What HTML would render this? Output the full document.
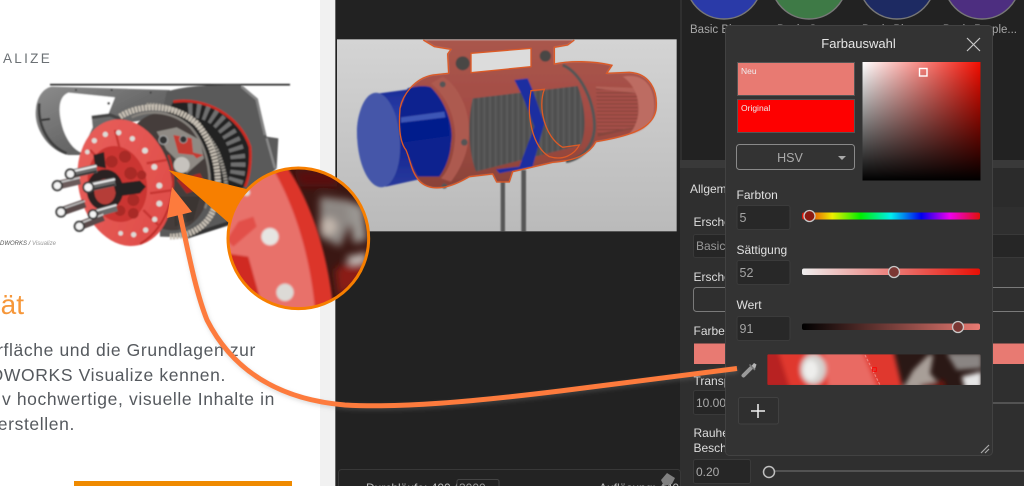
<!DOCTYPE html>
<html><head><meta charset="utf-8"><style>
html,body{margin:0;padding:0;background:#fff;width:1024px;height:486px;overflow:hidden}
svg{display:block;position:absolute;left:0;top:0}
text{font-family:"Liberation Sans",sans-serif}
</style></head><body>
<svg width="1024" height="486" viewBox="0 0 1024 486" xmlns="http://www.w3.org/2000/svg">
<defs>
<filter id="b1" x="-10%" y="-10%" width="120%" height="120%"><feGaussianBlur stdDeviation="2.6"/></filter>
<filter id="b2" x="-20%" y="-20%" width="140%" height="140%"><feGaussianBlur stdDeviation="7"/></filter>
<filter id="b3" x="-20%" y="-20%" width="140%" height="140%"><feGaussianBlur stdDeviation="3.5"/></filter>
<filter id="b4" x="-30%" y="-30%" width="160%" height="160%"><feGaussianBlur stdDeviation="12"/></filter>
<filter id="sh" x="-10%" y="-10%" width="120%" height="120%"><feGaussianBlur stdDeviation="2"/></filter>
<linearGradient id="vp" x1="0" y1="0" x2="0" y2="1"><stop offset="0" stop-color="#d4d4d4"/><stop offset="1" stop-color="#bababa"/></linearGradient>
<linearGradient id="blu" x1="0" y1="0" x2="0" y2="1"><stop offset="0" stop-color="#1a2a96"/><stop offset=".3" stop-color="#2a3fa8"/><stop offset=".5" stop-color="#0c2090"/><stop offset="1" stop-color="#2a3a9c"/></linearGradient>
<linearGradient id="red" x1="0" y1="0" x2="0" y2="1"><stop offset="0" stop-color="#a9564c"/><stop offset=".5" stop-color="#a34c44"/><stop offset="1" stop-color="#8a4238"/></linearGradient>
<linearGradient id="mot" x1="0" y1="0" x2="0" y2="1"><stop offset="0" stop-color="#b5635a"/><stop offset=".4" stop-color="#a4534a"/><stop offset="1" stop-color="#83443c"/></linearGradient>
<linearGradient id="fr" x1="0" y1="0" x2="1" y2="1"><stop offset="0" stop-color="#8c8c8c"/><stop offset=".5" stop-color="#6a6a6a"/><stop offset="1" stop-color="#4e4e4e"/></linearGradient>
<pattern id="drum" width="17" height="10" patternUnits="userSpaceOnUse"><rect width="17" height="10" fill="#505050"/><rect width="6" height="10" fill="#5c5c5c"/></pattern>
<pattern id="fin" width="10" height="11" patternUnits="userSpaceOnUse"><rect width="10" height="11" fill="#a55048"/><rect y="0" width="10" height="3" fill="#823f37"/></pattern>
<linearGradient id="svH"><stop offset="0" stop-color="#fff"/><stop offset="1" stop-color="#f20d00"/></linearGradient>
<linearGradient id="svV" x1="0" y1="0" x2="0" y2="1"><stop offset="0" stop-color="#000" stop-opacity="0"/><stop offset="1" stop-color="#000"/></linearGradient>
<linearGradient id="hue"><stop offset="0" stop-color="#e01008"/><stop offset=".17" stop-color="#ee0"/><stop offset=".33" stop-color="#0e0"/><stop offset=".5" stop-color="#0ee"/><stop offset=".67" stop-color="#00e"/><stop offset=".83" stop-color="#e0e"/><stop offset="1" stop-color="#e01008"/></linearGradient>
<linearGradient id="sat"><stop offset="0" stop-color="#eee"/><stop offset="1" stop-color="#e80f05"/></linearGradient>
<linearGradient id="val"><stop offset="0" stop-color="#000"/><stop offset="1" stop-color="#e87a72"/></linearGradient>
<linearGradient id="disc" x1="0" y1="0" x2="1" y2="1"><stop offset="0" stop-color="#e8605c"/><stop offset="1" stop-color="#de4a46"/></linearGradient>
<clipPath id="mag"><circle cx="895" cy="595" r="210"/></clipPath>
<clipPath id="strip"><rect x="262" y="343" width="640" height="92" rx="3"/></clipPath>
<clipPath id="vclip"><rect x="3" y="28" width="1019" height="576"/></clipPath>
</defs>

<!-- left page -->
<rect x="0" y="0" width="320" height="486" fill="#fff"/>
<rect x="320" y="0" width="15" height="486" fill="#f1f1f1"/>
<rect x="335" y="0" width="1" height="486" fill="#666"/>
<text x="3" y="63" font-size="13.5" letter-spacing="2.3" fill="#6b7074">ALIZE</text>
<text x="0" y="245" font-size="6" font-style="italic" fill="#555">DWORKS / <tspan fill="#999">Visualize</tspan></text>
<text x="24" y="314" text-anchor="end" font-size="28" fill="#f6973a">ät</text>
<g font-size="17.5" fill="#55595e" letter-spacing=".62" text-anchor="end">
<text x="256" y="356">rfläche und die Grundlagen zur</text>
<text x="226" y="381">DWORKS Visualize kennen.</text>
<text x="275" y="405">v hochwertige, visuelle Inhalte in</text>
<text x="75" y="430">erstellen.</text>
</g>
<rect x="74" y="481" width="218" height="5" fill="#ef8a00"/>

<!-- clutch image -->
<g transform="translate(0,40) scale(.33333)">
<g filter="url(#b1)">
<path d="M150,134 L870,134" stroke="#1c1c1c" stroke-width="5" fill="none"/>
<!-- left frame -->
<path d="M155,140 L510,150 L500,230 L290,262 L250,345 L205,345 C140,330 100,260 108,205 C112,170 130,145 155,140Z" fill="url(#fr)"/>
<path d="M205,158 C178,170 170,205 190,270 C205,310 225,330 243,337 L278,262 L275,232 L325,222 L345,172 Z" fill="#fff"/>
<path d="M118,190 C112,250 140,315 200,340" fill="none" stroke="#3c3c3c" stroke-width="8"/>
<path d="M125,240 L150,237" stroke="#2c2c2c" stroke-width="6"/>
<path d="M275,232 L330,225 L370,240" fill="none" stroke="#444" stroke-width="10"/>
<g fill="#333"><circle cx="228" cy="150" r="3"/><circle cx="335" cy="150" r="3"/><circle cx="452" cy="158" r="3"/><circle cx="326" cy="190" r="4"/></g>
<!-- right frame -->
<path d="M500,155 C560,135 650,135 720,135 L770,175 L800,290 L835,295 L830,385 L770,440 L700,545 L560,592 L480,590 L470,300Z" fill="#5a5a5a"/>
<path d="M725,140 L770,178 L795,285" fill="none" stroke="#858585" stroke-width="8"/>
<path d="M800,295 L825,385" stroke="#8a8a8a" stroke-width="7"/>
<path d="M560,590 L700,545" stroke="#333" stroke-width="12"/>
<!-- coils -->
<path d="M520,185 C620,170 720,230 750,320 C755,370 745,420 735,440 L600,500 L480,260Z" fill="#242424"/>
<path d="M565,212 C640,205 695,270 712,340 C718,380 712,410 705,428" fill="none" stroke="#6e6e6e" stroke-width="44" stroke-dasharray="12 12"/>
<path d="M520,185 C620,170 720,230 750,320 C755,370 745,420 735,440" fill="none" stroke="#c92c24" stroke-width="8"/>
<!-- gears -->
<path d="M440,195 C520,190 600,240 650,330 C680,400 690,470 665,520" fill="none" stroke="#9c9890" stroke-width="12" stroke-dasharray="6 3"/>
<ellipse cx="500" cy="395" rx="128" ry="178" transform="rotate(-12 500 395)" fill="#443d3a"/>
<path d="M360,230 C420,190 520,190 590,250 C650,320 670,430 640,510 C620,560 570,590 510,590" fill="none" stroke="#c8c0b4" stroke-width="18" stroke-dasharray="7 3"/>
<path d="M395,232 C450,205 525,215 575,265 C625,325 645,430 615,505" fill="none" stroke="#85817c" stroke-width="7"/>
<path d="M470,275 L530,262 L600,300 L612,355 L560,400 L540,370 L500,330Z" fill="#8f8a84"/>
<path d="M520,285 L575,295 L580,345 L535,340Z" fill="#c43a32"/>
<circle cx="490" cy="300" r="13" fill="#333" stroke="#aaa" stroke-width="3"/>
<circle cx="550" cy="298" r="11" fill="#333" stroke="#999" stroke-width="3"/>
<circle cx="545" cy="375" r="24" fill="#c6c2bd"/>
<path d="M570,335 L610,345 L590,355Z" fill="#c43a32"/>
<path d="M530,420 L600,400 L620,440 L560,460Z" fill="#a92822"/>
<path d="M520,470 L600,470 L580,540 L525,560Z" fill="#3a3431"/>
<!-- disc -->
<ellipse cx="375" cy="428" rx="140" ry="192" transform="rotate(-12 375 428)" fill="url(#disc)"/>
<path d="M505,345 C540,430 510,560 420,612" fill="none" stroke="#bc2c26" stroke-width="6"/>
<ellipse cx="352" cy="432" rx="88" ry="115" transform="rotate(-12 352 432)" fill="#cb3632"/>
<path d="M440,370 L500,360 M450,460 L520,450 M430,510 L480,560 M345,270 L360,330 M270,330 L310,370" stroke="#c63430" stroke-width="7"/>
<g fill="#dedbd7"><circle cx="283" cy="302" r="8"/><circle cx="316" cy="283" r="8"/><circle cx="356" cy="278" r="8"/><circle cx="397" cy="296" r="8"/><circle cx="435" cy="332" r="9"/><circle cx="463" cy="381" r="9"/><circle cx="478" cy="437" r="9"/><circle cx="478" cy="491" r="9"/><circle cx="464" cy="538" r="8"/><circle cx="437" cy="570" r="8"/><circle cx="401" cy="584" r="8"/><circle cx="362" cy="580" r="7"/><circle cx="262" cy="336" r="7"/></g>
<g fill="#a92a26"><circle cx="335" cy="365" r="18"/><circle cx="375" cy="350" r="18"/><circle cx="392" cy="400" r="19"/><circle cx="425" cy="405" r="14"/><circle cx="400" cy="480" r="18"/><circle cx="360" cy="512" r="16"/><circle cx="400" cy="520" r="16"/></g>
<ellipse cx="315" cy="450" rx="55" ry="62" fill="#2a2424"/>
<ellipse cx="315" cy="455" rx="32" ry="38" fill="#b53c38"/>
<path d="M340,432 L420,422 L438,440 L420,460 L350,470Z" fill="#272020"/>
<path d="M280,345 L312,336 L318,385 L285,378Z" fill="#2c2020"/>
<g stroke-linecap="butt" fill="none">
<path d="M210,403 L290,385" stroke="#6a6a6a" stroke-width="26"/><path d="M210,396 L290,378" stroke="#eee" stroke-width="6"/><path d="M210,412 L290,394" stroke="#333" stroke-width="6"/>
<path d="M172,436 L240,420" stroke="#6a5a5a" stroke-width="26"/><path d="M172,429 L240,413" stroke="#ccc" stroke-width="5"/>
<path d="M265,442 L345,425" stroke="#6a6a6a" stroke-width="26"/><path d="M265,435 L345,418" stroke="#eee" stroke-width="6"/><path d="M265,451 L345,434" stroke="#333" stroke-width="6"/>
<path d="M183,515 L255,490" stroke="#5a4a4a" stroke-width="26"/><path d="M183,508 L255,483" stroke="#bbb" stroke-width="5"/>
<path d="M280,522 L350,502" stroke="#6a6a6a" stroke-width="24"/><path d="M280,515 L350,495" stroke="#eee" stroke-width="5"/>
<path d="M238,558 L310,530" stroke="#5a4a4a" stroke-width="26"/><path d="M238,551 L310,523" stroke="#ccc" stroke-width="5"/>
</g>
<g fill="#f4f4f4" stroke="#3a3a3a" stroke-width="6"><circle cx="211" cy="402" r="14"/><circle cx="172" cy="437" r="14"/><circle cx="265" cy="442" r="15"/><circle cx="183" cy="516" r="14"/><circle cx="279" cy="523" r="13"/><circle cx="238" cy="559" r="14"/></g>
</g>
</g>

<!-- dark centre -->
<rect x="336" y="0" width="344" height="486" fill="#222"/>
<g transform="translate(336,30) scale(.33333)">
<rect x="3" y="28" width="1019" height="576" fill="url(#vp)"/>
<g clip-path="url(#vclip)" filter="url(#b1)">
<rect x="494" y="430" width="13" height="180" fill="#575757"/>
<rect x="556" y="420" width="14" height="190" fill="#575757"/>
<!-- blue cylinder -->
<path d="M130,190 L280,170 L350,300 L330,430 L150,470 C100,460 62,380 63,300 C65,230 95,195 130,190Z" fill="url(#blu)"/>
<ellipse cx="128" cy="330" rx="64" ry="142" transform="rotate(-4 128 330)" fill="#4457a9"/>
<!-- body -->
<path d="M192,235 C200,195 235,145 290,135 L338,130 L335,72 L345,58 L295,50 L262,30 L715,30 L695,45 L655,52 L655,102 C700,92 770,92 828,106 L812,130 L880,127 C940,130 967,180 960,240 C950,290 900,315 780,335 C760,372 720,392 650,397 L530,425 L520,456 L482,456 L470,432 L400,440 C350,470 290,490 252,455 C225,425 225,395 210,360 C190,335 188,285 192,235Z" fill="url(#red)"/>
<!-- blue over body -->
<path d="M215,175 C240,168 270,165 285,172 C330,215 355,290 345,340 C342,385 325,420 310,440 L245,440 C228,415 225,395 210,360 C190,335 188,285 192,235Z" fill="#10238f"/>
<path d="M195,278 L335,262 L340,318 L198,338Z" fill="#001f8c"/>
<path d="M195,262 L325,245 L328,262 L195,278Z" fill="#3e56b6"/>
<path d="M285,160 C340,205 365,280 355,345 C350,390 335,425 315,445 L345,455 C380,410 410,340 395,260 C385,205 350,155 320,140Z" fill="#ad5a50"/>
<path d="M780,170 L925,175 L925,290 L785,320Z" fill="url(#mot)"/>
<path d="M780,175 L905,190 L905,290 L785,310Z" fill="url(#fin)"/>
<path d="M860,140 C930,125 960,180 955,240 C950,280 920,305 880,312 C920,270 920,180 860,140Z" fill="#bd6c62"/>
<path d="M680,105 C740,130 780,230 775,300 C770,350 740,385 690,395" fill="none" stroke="#555" stroke-width="9"/>
<path d="M410,205 L725,168 C745,220 755,290 735,345 L420,425 C395,360 395,270 410,205Z" fill="url(#drum)"/>
<path d="M535,150 L575,145 L590,180 L625,280 L590,410 L490,430 L480,418 L550,410 L595,290 L560,200Z" fill="#1c2fa0"/>
<circle cx="380" cy="100" r="21" fill="#4a4644"/><circle cx="628" cy="78" r="17" fill="#4a4644"/><circle cx="320" cy="163" r="9" fill="#555"/><circle cx="385" cy="337" r="10" fill="#555"/>
<circle cx="325" cy="468" r="8" fill="#555"/>
</g>
<g clip-path="url(#vclip)" fill="none" stroke="#dc5a26" stroke-width="4">
<path d="M262,30 L295,50 L345,58 L335,72 L338,130 L290,135 C235,145 200,195 192,235 C188,285 190,335 210,360 C225,395 225,425 252,455 C290,490 350,470 400,440 L470,432 L482,456 L520,456 L530,425 L650,397 C720,392 760,372 780,335 C900,315 950,290 960,240 C967,180 940,130 880,127 L812,130 L828,106 C770,92 700,92 655,102 L655,52 L695,45 L715,30"/>
<path d="M585,182 L625,178 C605,230 625,320 680,352 L730,345 C715,375 680,392 640,380 C590,350 570,260 585,182Z"/>
</g>
<path d="M405,70 L585,55 L585,110 L405,128Z" fill="#dcdcdc" stroke="#dc5a26" stroke-width="4"/>
</g>

<!-- right panel -->
<rect x="680" y="0" width="344" height="486" fill="#2f2f2f"/>
<rect x="682" y="0" width="342" height="160" fill="#222"/>
<rect x="680" y="160" width="344" height="8" fill="#393939"/>
<rect x="992" y="168" width="32" height="39" fill="#2b2b2b"/>
<g stroke="#777" stroke-width="1.5">
<circle cx="724" cy="-19" r="38" fill="#2a3aa8"/>
<circle cx="809" cy="-19" r="38" fill="#3e7a46"/>
<circle cx="897" cy="-19" r="38" fill="#1d2a62"/>
<circle cx="982" cy="-19" r="38" fill="#4d2e80"/>
</g>
<g font-size="11.5" fill="#a8a8a8">
<text x="690" y="33">Basic Blue</text>
<text x="777" y="33">Basic Green</text>
<text x="862" y="33">Basic Blue</text>
<text x="1017" y="33" text-anchor="end">Basic Purple...</text>
</g>
<g font-size="12" fill="#ddd">
<text x="690" y="193">Allgemein</text>
<text x="693.5" y="226">Erscheinung</text>
<text x="693.5" y="281">Erscheinung</text>
<text x="693.5" y="335">Farbe</text>
<text x="693.5" y="385">Transparenz</text>
<text x="693.5" y="437">Rauheit</text>
<text x="693.5" y="452">Beschichtung</text>
</g>
<rect x="693.5" y="234.5" width="340" height="23" rx="2" fill="#262626" stroke="#393939"/>
<text x="696" y="250" font-size="12" fill="#999">Basic</text>
<rect x="693.5" y="287.5" width="340" height="24" rx="3" fill="none" stroke="#7a7a7a"/>
<rect x="694" y="343.5" width="330" height="20.5" fill="#e87a72"/>
<rect x="693.5" y="390.5" width="57" height="24" rx="2" fill="#262626" stroke="#3a3a3a"/>
<text x="696" y="407" font-size="12" fill="#aaa">10.00</text>
<line x1="760" y1="403" x2="1024" y2="403" stroke="#777"/>
<rect x="693.5" y="459.5" width="57" height="24" rx="2" fill="#262626" stroke="#3a3a3a"/>
<text x="696" y="476" font-size="12" fill="#aaa">0.20</text>
<line x1="770" y1="471" x2="1024" y2="471" stroke="#777"/>
<circle cx="769" cy="472" r="5.5" fill="#333" stroke="#c0c0c0" stroke-width="1.5"/>

<!-- bottom bar -->
<rect x="338.5" y="469.5" width="342" height="30" rx="3" fill="#232323" stroke="#383838"/>
<text x="366" y="492" font-size="12" fill="#bbb">Durchläufe: 400 /</text>
<rect x="457" y="479.5" width="42" height="20" rx="2" fill="#222" stroke="#444"/>
<text x="459" y="492" font-size="12" fill="#999">3000</text>
<text x="599" y="492" font-size="12" fill="#bbb">Auflösung: 440</text>
<path d="M667,473 L675,478 L672,484 L664,486 L661,480Z" fill="#808080"/>

<!-- dialog -->
<rect x="725.5" y="25.5" width="267" height="430" rx="4" fill="#333" stroke="#424242"/>
<text x="858.5" y="48" font-size="13" fill="#e6e6e6" text-anchor="middle">Farbauswahl</text>
<path d="M967,38 L980,51 M980,38 L967,51" stroke="#c8c8c8" stroke-width="1.2" fill="none"/>
<rect x="737.5" y="62.5" width="117" height="33" fill="#e87a72" stroke="#555"/>
<text x="741" y="74" font-size="8.5" fill="#eee">Neu</text>
<rect x="737.5" y="99.5" width="117" height="33" fill="#fe0000" stroke="#555"/>
<text x="741" y="111" font-size="8.5" fill="#eee">Original</text>
<rect x="736.5" y="144.5" width="118" height="25" rx="3" fill="#333" stroke="#8a8a8a"/>
<text x="790" y="162" font-size="12.5" fill="#aaa" text-anchor="middle">HSV</text>
<path d="M838,156 L846,156 L842,160Z" fill="#aaa"/>
<rect x="862.5" y="62" width="118" height="118.5" fill="url(#svH)"/>
<rect x="862.5" y="62" width="118" height="118.5" fill="url(#svV)"/>
<rect x="919.5" y="68.5" width="7.5" height="7.5" fill="none" stroke="#fff" stroke-width="1.4"/>

<g font-size="12" fill="#e0e0e0">
<text x="736.5" y="199">Farbton</text>
<text x="736.5" y="254">Sättigung</text>
<text x="736.5" y="309">Wert</text>
</g>
<g fill="#282828" stroke="#3b3b3b">
<rect x="737" y="205.5" width="53" height="24" rx="2"/>
<rect x="737" y="260.5" width="53" height="24" rx="2"/>
<rect x="737" y="316.5" width="53" height="24" rx="2"/>
</g>
<g font-size="12.5" fill="#a5a5a5">
<text x="739.5" y="222">5</text>
<text x="739.5" y="277">52</text>
<text x="739.5" y="333">91</text>
</g>
<rect x="802" y="212.5" width="178" height="7" rx="2" fill="url(#hue)"/>
<rect x="802" y="268.5" width="178" height="6.5" rx="2" fill="url(#sat)"/>
<rect x="802" y="323.5" width="178" height="6.5" rx="2" fill="url(#val)"/>
<circle cx="809.5" cy="216" r="5.5" fill="#8a1a12" stroke="#c8c8c8" stroke-width="1.3"/>
<circle cx="894" cy="272" r="5.5" fill="#7b3834" stroke="#c8c8c8" stroke-width="1.3"/>
<circle cx="958" cy="327" r="5.5" fill="#7b3834" stroke="#c8c8c8" stroke-width="1.3"/>

<!-- eyedropper -->
<path d="M743.5,375.5 L751,368" stroke="#9a9a9a" stroke-width="4" stroke-linecap="round" fill="none"/>
<path d="M751,366.5 L754,363 L756.5,364.5 L755,369Z" fill="#b5b5b5"/>
<path d="M749.5,364.5 L755,370" stroke="#777" stroke-width="1.5"/>

<!-- preview strip -->
<g transform="translate(680,240) scale(.33333)">
<g clip-path="url(#strip)">
<rect x="262" y="343" width="640" height="92" fill="#2a1815"/>
<g filter="url(#b2)">
<path d="M250,330 L640,330 L668,445 L250,445Z" fill="#e0382e"/>
<path d="M250,335 L295,335 L330,445 L250,445Z" fill="#b82420"/>
<path d="M430,330 L545,330 L592,445 L445,445Z" fill="#e96a64"/>
<ellipse cx="400" cy="388" rx="38" ry="46" fill="#d4d2cf"/>
<ellipse cx="392" cy="390" rx="22" ry="30" fill="#eeeeec"/>
<path d="M668,445 L700,390 L745,345 L760,345 L750,400 L790,445Z" fill="#a89f98"/>
<path d="M800,340 L905,340 L905,385 L830,390Z" fill="#8a8583"/>
<path d="M845,410 L905,395 L905,445 L855,445Z" fill="#e6e6e6"/>
<path d="M720,435 L790,420 L800,445 L720,445Z" fill="#6a1410"/>
</g>
<path d="M555,345 L600,435" stroke="#ee8a84" stroke-width="3" stroke-dasharray="8 5"/>
<rect x="578" y="383" width="11" height="11" fill="none" stroke="#f00" stroke-width="2.5"/>
</g>
</g>

<rect x="738.5" y="397.5" width="40" height="26.5" rx="2" fill="#2f2f2f" stroke="#414141"/>
<path d="M751,411 L765,411 M758,404 L758,418" stroke="#f2f2f2" stroke-width="1.5" fill="none"/>
<path d="M981,453 L989,445 M985,453 L989,449" stroke="#aaa" stroke-width="1.2" fill="none"/>

<!-- annotations -->
<g transform="translate(0,40) scale(.33333)">
<path d="M505,390 L752,450 L690,552Z" fill="#f77f00"/>
<g clip-path="url(#mag)">
<rect x="680" y="380" width="430" height="430" fill="#3a1713"/>
<g filter="url(#b4)">
<path d="M960,470 L1040,480 L1060,530 L1020,620 L960,590Z" fill="#8e8884"/>
<path d="M880,390 L1020,390 L1010,440 L900,440Z" fill="#5a100c"/>
<path d="M1040,480 L1090,500 L1100,600 L1060,610Z" fill="#9a9692"/>
<circle cx="985" cy="560" r="26" fill="#c2b6ac"/>
<path d="M1005,690 L1100,630 L1100,720 L1015,770Z" fill="#8a1a14"/>
<path d="M1040,650 L1100,640 L1100,665 L1050,675Z" fill="#c8c4c0"/>
</g>
<g filter="url(#b3)">
<path d="M670,380 L860,380 C930,480 985,640 1000,810 L670,810Z" fill="#dc342c"/>
<path d="M670,380 L815,380 C880,490 930,640 945,810 L670,810Z" fill="#e8716a"/>
<path d="M680,600 L715,545 L760,530 L770,560 L700,620Z" fill="#e25048"/>
<path d="M680,640 L745,650 L790,810 L680,810Z" fill="#d02a24"/>
<circle cx="810" cy="590" r="26" fill="#e6e5e2"/>
<circle cx="855" cy="757" r="26" fill="#dcdad6"/>
<circle cx="740" cy="458" r="10" fill="#ddd"/>
</g>
</g>
<circle cx="895" cy="595" r="211" fill="none" stroke="#f77f00" stroke-width="9"/>
</g>

<path d="M737,368.5 L560,391 C470,402 400,408 345,405 C285,400 235,375 207,320 C195,290 188,250 178,205" fill="none" stroke="#888" stroke-opacity=".3" stroke-width="5" filter="url(#sh)" transform="translate(1,2)"/>
<path d="M737,368.5 L560,391 C470,402 400,408 345,405 C285,400 235,375 207,320 C195,290 188,250 178,205" fill="none" stroke="#fd7b3d" stroke-width="5"/>
<path d="M172,187 L192,212 L167,218Z" fill="#fd7b3d"/>
</svg>
</body></html>
